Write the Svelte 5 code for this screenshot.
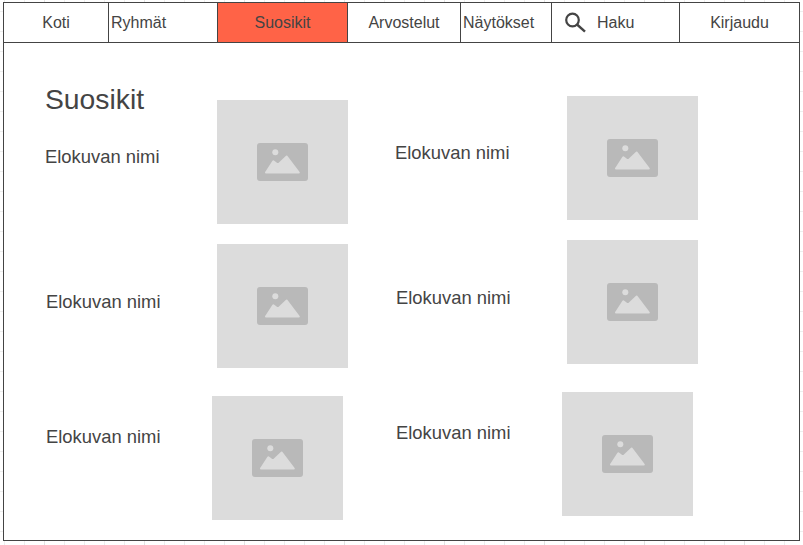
<script>
  const tabs = [
    { label: 'Koti', cls: 'koti' },
    { label: 'Ryhmät', cls: 'ryhmat' },
    { label: 'Suosikit', cls: 'suosikit active' },
    { label: 'Arvostelut', cls: 'arvostelut' },
    { label: 'Näytökset', cls: 'naytokset' },
    { label: 'Haku', cls: 'haku', search: true },
    { label: 'Kirjaudu', cls: 'kirjaudu' }
  ];

  const rows = ['first', 'second', 'third'];
</script>

{#snippet column(cls, title)}
  <div class="column {cls}">
    {#each rows as row, i}
      <div class="movie {row}">
        <div class="info">
          {#if title && i === 0}
            <h1>{title}</h1>
          {/if}
          <p class="name">Elokuvan nimi</p>
        </div>
        <div class="poster">
          <svg width="51" height="38" viewBox="0 0 51 38" aria-hidden="true">
            <rect width="51" height="38" rx="3" fill="#b9b9b9" />
            <circle cx="18.3" cy="9.3" r="3" fill="#dcdcdc" />
            <path
              d="M9 29.5 L16.3 18.3 L21 21.8 L29.7 13.5 L41.8 29.5 Z"
              fill="#dcdcdc"
              stroke="#dcdcdc"
              stroke-width="2"
              stroke-linejoin="round"
            />
          </svg>
        </div>
      </div>
    {/each}
  </div>
{/snippet}

<div class="frame">
  <nav>
    {#each tabs as tab}
      <div class="tab {tab.cls}">
        {#if tab.search}
          <svg width="24" height="24" viewBox="0 0 24 24" aria-hidden="true">
            <circle cx="8.5" cy="9" r="6.3" fill="none" stroke="#444" stroke-width="2.2" />
            <line x1="13" y1="13.5" x2="21" y2="20.6" stroke="#444" stroke-width="2.4" />
          </svg>
        {/if}
        <span>{tab.label}</span>
      </div>
    {/each}
  </nav>

  <main>
    {@render column('left', 'Suosikit')}
    {@render column('right', '')}
  </main>
</div>

<style>
  :global(html) {
    background: #fff;
  }

  :global(body) {
    min-height: 545px;
    font-family: "Liberation Sans", Arial, sans-serif;
    color: #444;
    overflow: hidden;
    background-color: #fff;
    background-image:
      linear-gradient(to right, #e4e4e4 1px, transparent 1px),
      linear-gradient(to bottom, #eeeeee 1px, transparent 1px),
      linear-gradient(to right, #eeeeee 1px, transparent 1px);
    background-size: 100px 100%, 20px 20px, 20px 20px;
    background-position: 44px 0, 0 11px, 4px 0;
  }

  .frame {
    box-sizing: border-box;
    width: 797px;
    height: 539px;
    margin: 2px 0 0 3px;
    border: 1px solid #444;
    background: #fff;
    display: flex;
    flex-direction: column;
  }

  nav {
    display: grid;
    grid-template-columns: 105px 109px 130px 113px 91px 128px 119px;
    height: 40px;
    flex: none;
    box-sizing: border-box;
    border-bottom: 1px solid #444;
    font-size: 16px;
  }

  .tab {
    display: flex;
    align-items: center;
    justify-content: center;
    box-sizing: border-box;
    padding-top: 1px;
    border-right: 1px solid #444;
  }

  .tab:last-child {
    border-right: 0;
  }

  .ryhmat,
  .naytokset {
    justify-content: flex-start;
    padding-left: 2px;
  }

  .active {
    background: #ff6347;
  }

  .haku {
    justify-content: flex-start;
    padding-left: 12px;
    gap: 9px;
  }

  main {
    display: flex;
    flex: 1;
    padding-left: 41px;
  }

  .column {
    width: 350px;
  }

  .left {
    padding-top: 57px;
  }

  .right {
    padding-top: 53px;
  }

  .movie {
    display: grid;
    grid-template-columns: 172px 131px;
  }

  .first {
    margin-bottom: 20px;
  }

  .second {
    margin-bottom: 28px;
  }

  .third {
    grid-template-columns: 167px 131px;
  }

  h1 {
    margin: -17px 0 -15px;
    font-size: 28.3px;
    line-height: 32px;
    font-weight: 400;
  }

  .name {
    margin: 0;
    font-size: 18.4px;
    line-height: 20px;
  }

  .first .name {
    padding-top: 47px;
  }

  .second .name {
    padding: 48px 0 0 1px;
  }

  .third .name {
    padding: 31px 0 0 1px;
  }

  .poster {
    height: 124px;
    background: #dcdcdc;
    display: flex;
    align-items: center;
    justify-content: center;
  }
</style>
